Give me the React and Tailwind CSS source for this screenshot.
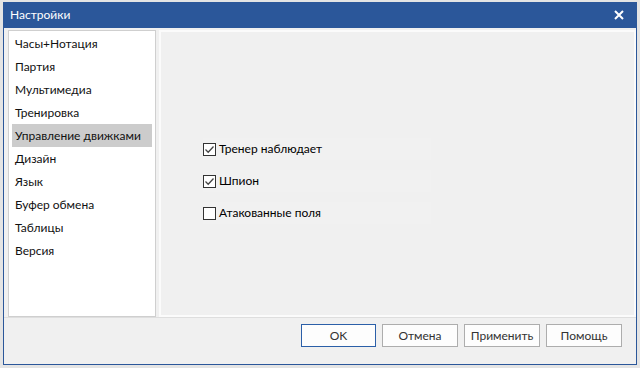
import React from "react";

const items = ["Часы+Нотация","Партия","Мультимедиа","Тренировка","Управление движками","Дизайн","Язык","Буфер обмена","Таблицы","Версия"];

function Check({ checked, label }) {
  return (
    <div className="flex items-center h-[22px] w-[228px] bg-[#f1f1f1]">
      <div className="w-[13px] h-[13px] border border-[#333] bg-white flex items-center justify-center">
        {checked && (
          <svg width="11" height="11" viewBox="0 0 11 11"><path d="M1.5 5.5 L4.2 8.2 L9.5 2.5" fill="none" stroke="#444" strokeWidth="1.3" /></svg>
        )}
      </div>
      <span className="ml-[3px] text-[12px] text-black">{label}</span>
    </div>
  );
}

function Btn({ children, primary }) {
  return (
    <div className={"h-[23px] flex items-center justify-center bg-[#fdfdfd] text-[12px] text-[#333] border " + (primary ? "w-[75px] border-[#2b5fa8]" : "w-[76px] border-[#adadad]")}>
      {children}
    </div>
  );
}

export default function App() {
  return (
    <div className="w-[640px] h-[368px] bg-[#e4e4e4] pl-[3px] pt-[2px]" style={{ fontFamily: 'Lato, "Open Sans", sans-serif' }}>
      <div className="w-[634px] h-[363px] border border-[#2b579a] bg-[#f0f0f0] flex flex-col">
        <div className="h-[26px] bg-[#2b579a] flex items-center justify-between pl-[7px] pr-[13px] -mx-px -mt-px">
          <span className="text-white text-[12px]">Настройки</span>
          <svg width="10" height="10" viewBox="0 0 10 10"><path d="M1 1 L9 9 M9 1 L1 9" stroke="white" strokeWidth="2" /></svg>
        </div>
        <div className="flex h-[289px] pl-[4px] pt-[2px]">
          <div className="w-[148px] h-[287px] bg-white border border-[#cfcfcf] pt-[1px] px-[3px]">
            {items.map((t, i) => (
              <div key={t} className={"h-[23px] flex items-center pl-[3px] text-[12px] text-[#111] " + (i === 4 ? "bg-[#cccccc]" : "")}>{t}</div>
            ))}
          </div>
          <div className="ml-[3px] w-[477px] h-[287px] border-[2px] border-[#fbfbfb] bg-[#f0f0f0] pl-[42px] pt-[106px] flex flex-col gap-[10px]">
            <Check checked label="Тренер наблюдает" />
            <Check checked label="Шпион" />
            <Check label="Атакованные поля" />
          </div>
        </div>
        <div className="border-t border-[#dedede] flex-1 flex justify-end items-start pt-[6px] pr-[14px] gap-[6px]">
          <Btn primary>OK</Btn>
          <Btn>Отмена</Btn>
          <Btn>Применить</Btn>
          <Btn>Помощь</Btn>
        </div>
      </div>
    </div>
  );
}
